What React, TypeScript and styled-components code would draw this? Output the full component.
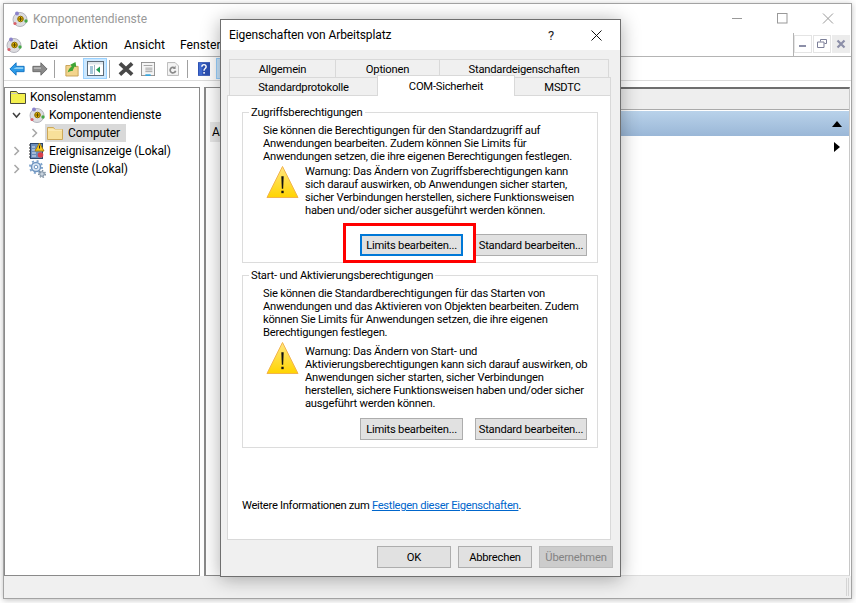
import * as React from 'react';
import styled, { createGlobalStyle } from 'styled-components';

const GlobalStyle = createGlobalStyle`
	html, body {
		margin: 0;
		padding: 0;
		background: #fff;
		font-family: Roboto, 'Liberation Sans', sans-serif;
		font-size: 11.2px;
		letter-spacing: -0.22px;
		color: #000;
	}
`;

const menuItems = [
	{ text: 'Datei', width: 43 },
	{ text: 'Aktion', width: 51 },
	{ text: 'Ansicht', width: 56 },
	{ text: 'Fenster', width: 56 },
];

const BackIcon = () => (
	<svg width="18" height="16" viewBox="0 0 18 16">
		<path d="M1 8 8 1v4h9v6H8v4z" fill="#2c9be8" stroke="#0f6fc0" />
		<path d="M8 6h8v2H5z" fill="#8fd0f5" />
	</svg>
);

const ForwardIcon = () => (
	<svg width="18" height="16" viewBox="0 0 18 16">
		<path d="M17 8 10 1v4H1v6h9v4z" fill="#8a8a8a" stroke="#666" />
		<path d="M2 6h8v2H2z" fill="#b5b5b5" />
	</svg>
);

const UpFolderIcon = () => (
	<svg width="16" height="18" viewBox="0 0 16 18">
		<path d="M1 5h5l1 1h8v11H1z" fill="#f3d48c" stroke="#c39b4f" />
		<path d="M3 13c1-4 3-6 5-7L6 4l6-3 1 6-2-1c-1 2-2 4-2 5-2 0-4 1-6 2z" fill="#3fa535" />
	</svg>
);

const ShowTreeIcon = () => (
	<svg width="17" height="15" viewBox="0 0 17 15">
		<rect x=".5" y=".5" width="16" height="14" fill="#fff" stroke="#5d6b78" />
		<rect x="1" y="1" width="15" height="2.500" fill="#dfe6ec" />
		<path d="M3 6h3M3 8h3M3 10h3M3 12h3" stroke="#4b8db5" />
		<path d="M13 5.500v6.500L9 8.750z" fill="#1f9d55" />
		<path d="M7.500 4v10" stroke="#9fb4c2" />
	</svg>
);

const DeleteIcon = () => (
	<svg width="17" height="16" viewBox="0 0 17 16">
		<path d="M2 2 15 14M15 2 2 14" stroke="#484848" strokeWidth="4" />
	</svg>
);

const PropertiesIcon = () => (
	<svg width="16" height="16" viewBox="0 0 16 16">
		<rect x=".5" y=".5" width="15" height="15" fill="#f5f5f5" stroke="#8a8a8a" />
		<path d="M3 4h10M5 7h8M5 9h8M5 11h8" stroke="#9a9a9a" />
		<rect x="5" y="14" width="6" height="2" fill="#3aa6dc" />
	</svg>
);

const RefreshIcon = () => (
	<svg width="14" height="16" viewBox="0 0 14 16">
		<path d="M.5.500h9l4 4v11H.5z" fill="#f4f4f4" stroke="#b0b0b0" />
		<path d="M10 10a3.200 3.200 0 1 1-1-3" fill="none" stroke="#8a8a8a" strokeWidth="2" />
		<path d="M10 4v4H7z" fill="#8a8a8a" />
	</svg>
);

const HelpIcon = () => (
	<svg width="14" height="16" viewBox="0 0 14 16">
		<rect width="14" height="16" fill="#2b4fb0" />
		<rect x="1" y="1" width="4" height="14" fill="#3f6ad0" />
		<path d="M4.500 5.500c0-3.500 5-3.500 5 0 0 2-2.500 2-2.500 4.500" fill="none" stroke="#fff" strokeWidth="1.700" />
		<rect x="6.200" y="11.500" width="1.800" height="2" fill="#fff" />
	</svg>
);

const ServicesLogo = ({ size = 16 }: { size?: number }) => (
	<svg width={size} height={size} viewBox="0 0 16 16">
		<circle cx="8" cy="8.500" r="7" fill="#dcdce0" stroke="#b4b4bc" />
		<circle cx="8.500" cy="8" r="2.800" fill="#e6b400" stroke="#8a6c00" />
		<path d="M8.500 6v4M6.500 8h4" stroke="#5c4a00" />
		<circle cx="5" cy="2.500" r="2" fill="#8c84cc" />
		<circle cx="3" cy="12.500" r="1.600" fill="#d9606a" />
		<circle cx="14" cy="10" r="1.700" fill="#46a846" />
	</svg>
);

const PlainFolder = () => (
	<svg width="16" height="14" viewBox="0 0 16 14">
		<path d="M.5 1.500h6l1.500 2h7.500v10H.5z" fill="#f8e09a" stroke="#cda859" />
		<path d="M1 4h14" stroke="#fff2c8" />
	</svg>
);

const RootFolder = () => (
	<svg width="16" height="14" viewBox="0 0 16 14">
		<path d="M.5 1.500h6l1.500 2h7.500v10H.5z" fill="#f4f04e" stroke="#4c4c3a" />
		<path d="M1 3.500h6" stroke="#c8c8c0" />
	</svg>
);

const EventLogIcon = () => (
	<svg width="16" height="18" viewBox="0 0 16 18">
		<rect x="1.500" y="1.500" width="12" height="15" fill="#6a8dbb" stroke="#2e466c" />
		<path d="M1 3H0M1 6H0M1 9H0M1 12H0M1 15H0" stroke="#222" />
		<path d="M3 5h3M3 8h3M3 11h4M3 14h4" stroke="#dfe7f2" />
		<path d="M10.500 1 15 9H6z" fill="#f5c61c" stroke="#a9820f" />
		<rect x="10" y="3.500" width="1" height="3" fill="#222" />
		<circle cx="11.500" cy="13" r="2.800" fill="#d9404a" />
	</svg>
);

const GearsIcon = () => (
	<svg width="17" height="18" viewBox="0 0 17 18">
		<circle cx="7" cy="7" r="4.500" fill="#dbe8f5" stroke="#6f94bf" strokeWidth="1.500" />
		<circle cx="7" cy="7" r="6" fill="none" stroke="#7ea3cb" strokeWidth="2" strokeDasharray="2 2.700" />
		<circle cx="7" cy="7" r="1.800" fill="#fff" stroke="#6f94bf" />
		<circle cx="13" cy="14" r="2.300" fill="#c7d2dd" stroke="#74879a" />
		<circle cx="13" cy="14" r="3.300" fill="none" stroke="#74879a" strokeWidth="1.300" strokeDasharray="1.500 1.500" />
	</svg>
);

const WarningIcon = ({ id }: { id: string }) => (
	<svg width="33" height="34" viewBox="0 0 34 34">
		<defs>
			<linearGradient id={id} x1="0" y1="0" x2="0" y2="1">
				<stop offset="0" stopColor="#ffe680" />
				<stop offset="1" stopColor="#ffd400" />
			</linearGradient>
		</defs>
		<path d="M17 1 33 33H1z" fill={`url(#${id})`} stroke="#f2b24a" />
		<path d="M15.800 11h2.400l-.5 13h-1.400z" fill="#111" />
		<rect x="15.800" y="26" width="2.400" height="2.500" fill="#111" />
	</svg>
);

const Chevron = ({ open }: { open?: boolean }) => (
	<svg width="9" height="10" viewBox="0 0 9 10">
		{open ? (
			<path d="M1 3 4.500 7 8 3" fill="none" stroke="#404040" strokeWidth="1.500" />
		) : (
			<path d="M2.500 1 6.500 5 2.500 9" fill="none" stroke="#a6a6a6" strokeWidth="1.500" />
		)}
	</svg>
);

export default function App() {
	return (
		<>
			<GlobalStyle />
			<Page>
				<Window>
					<TitleBar>
						<ServicesLogo />
						<TitleText>Komponentendienste</TitleText>
						<WindowControls>
							<svg width="102" height="12" viewBox="0 0 102 12">
								<path d="M0 5.500h10" stroke="#999" />
								<rect x="45.500" y=".5" width="9.500" height="9.500" fill="none" stroke="#999" />
								<path d="M91 .5 101 10.500M101 .5 91 10.500" stroke="#999" />
							</svg>
						</WindowControls>
					</TitleBar>
					<MenuBar>
						<MenuMain>
							<MenuLogo>
								<ServicesLogo />
							</MenuLogo>
							{menuItems.map(item => (
								<MenuItem key={item.text} $width={item.width}>
									{item.text}
								</MenuItem>
							))}
						</MenuMain>
						<MdiButtons>
							<MdiButton>
								<svg width="8" height="8" viewBox="0 0 8 8">
									<rect y="5" width="7" height="2" fill="#8c8fa8" />
								</svg>
							</MdiButton>
							<MdiButton>
								<svg width="10" height="10" viewBox="0 0 10 10">
									<path d="M3.500 2.500v-2h6v4h-2M.5 3h6.500v5.500H.5z" fill="none" stroke="#7c7f98" />
								</svg>
							</MdiButton>
							<MdiButton $close>
								<svg width="10" height="10" viewBox="0 0 10 10">
									<path d="M1.500 1.500 8.500 8.500M8.500 1.500 1.500 8.500" stroke="#8c8fa8" strokeWidth="2.200" />
								</svg>
							</MdiButton>
						</MdiButtons>
					</MenuBar>
					<Toolbar>
						<ToolButton $w={18} $ml={4}>
							<BackIcon />
						</ToolButton>
						<ToolButton $w={18} $ml={5}>
							<ForwardIcon />
						</ToolButton>
						<ToolSeparator $ml={5} />
						<ToolButton $w={16} $ml={9}>
							<UpFolderIcon />
						</ToolButton>
						<ToolButton $w={24} $ml={3} $active>
							<ShowTreeIcon />
						</ToolButton>
						<ToolSeparator $ml={2} />
						<ToolButton $w={18} $ml={7}>
							<DeleteIcon />
						</ToolButton>
						<ToolButton $w={16} $ml={5}>
							<PropertiesIcon />
						</ToolButton>
						<ToolButton $w={14} $ml={10}>
							<RefreshIcon />
						</ToolButton>
						<ToolSeparator $ml={7} />
						<ToolButton $w={14} $ml={9}>
							<HelpIcon />
						</ToolButton>
						<ToolButton $w={23} $ml={5} $active />
					</Toolbar>
					<Panes>
						<TreePane>
							<TreeRow $indent={5}>
								<RootFolder />
								<TreeLabel $gap={4}>Konsolenstamm</TreeLabel>
							</TreeRow>
							<TreeRow $indent={7}>
								<ChevronSlot>
									<Chevron open />
								</ChevronSlot>
								<ServicesLogo />
								<TreeLabel $gap={4}>Komponentendienste</TreeLabel>
							</TreeRow>
							<TreeRow $indent={25}>
								<ChevronSlot>
									<Chevron />
								</ChevronSlot>
								<SelectedNode>
									<PlainFolder />
									<TreeLabel $gap={5}>Computer</TreeLabel>
								</SelectedNode>
							</TreeRow>
							<TreeRow $indent={7}>
								<ChevronSlot>
									<Chevron />
								</ChevronSlot>
								<EventLogIcon />
								<TreeLabel $gap={4}>Ereignisanzeige (Lokal)</TreeLabel>
							</TreeRow>
							<TreeRow $indent={7}>
								<ChevronSlot>
									<Chevron />
								</ChevronSlot>
								<GearsIcon />
								<TreeLabel $gap={3}>Dienste (Lokal)</TreeLabel>
							</TreeRow>
						</TreePane>
						<CenterPane>
							<CenterHeader />
							<CenterRow>Arbeitsplatz</CenterRow>
						</CenterPane>
						<ActionsPane>
							<ActionsHeader />
							<ActionsTitle>
								<svg width="10" height="6" viewBox="0 0 10 6">
									<path d="M5 0 10 6H0z" fill="#000" />
								</svg>
							</ActionsTitle>
							<ActionsRow>
								<svg width="6" height="10" viewBox="0 0 6 10">
									<path d="M0 0 6 5 0 10z" fill="#000" />
								</svg>
							</ActionsRow>
						</ActionsPane>
					</Panes>
					<StatusBar>
						<StatusCell $width={85} />
						<StatusCell $width={1} />
					</StatusBar>

					<Dialog>
						<DialogTitle>
							<DialogTitleText>Eigenschaften von Arbeitsplatz</DialogTitleText>
							<HelpMark>?</HelpMark>
							<svg width="11" height="11" viewBox="0 0 11 11">
								<path d="M.5.500 10.500 10.500M10.500.500.5 10.500" stroke="#111" />
							</svg>
						</DialogTitle>
						<DialogBody>
							<Tabs>
								<TabRow>
									<Tab $width={107}>Allgemein</Tab>
									<Tab $width={105}>Optionen</Tab>
									<Tab $width={170}>Standardeigenschaften</Tab>
								</TabRow>
								<TabRow>
									<Tab $width={149}>Standardprotokolle</Tab>
									<Tab $width={138} $active>
										COM-Sicherheit
									</Tab>
									<Tab $width={97}>MSDTC</Tab>
								</TabRow>
							</Tabs>
							<TabPanel>
								<Group>
									<Legend>Zugriffsberechtigungen</Legend>
									<GroupText>
										Sie können die Berechtigungen für den Standardzugriff auf
										<br />
										Anwendungen bearbeiten. Zudem können Sie Limits für
										<br />
										Anwendungen setzen, die ihre eigenen Berechtigungen festlegen.
									</GroupText>
									<WarningRow $top={2} $iconTop={0}>
										<WarningIcon id="warnA" />
										<WarningText>
											Warnung: Das Ändern von Zugriffsberechtigungen kann
											<br />
											sich darauf auswirken, ob Anwendungen sicher starten,
											<br />
											sicher Verbindungen herstellen, sichere Funktionsweisen
											<br />
											haben und/oder sicher ausgeführt werden können.
										</WarningText>
									</WarningRow>
									<GroupButtons $top={17}>
										<RedFrame />
										<PushButton $width={103} $focused>
											Limits bearbeiten...
										</PushButton>
										<PushButton $width={112}>Standard bearbeiten...</PushButton>
									</GroupButtons>
								</Group>
								<Group $second>
									<Legend>Start- und Aktivierungsberechtigungen</Legend>
									<GroupText>
										Sie können die Standardberechtigungen für das Starten von
										<br />
										Anwendungen und das Aktivieren von Objekten bearbeiten. Zudem
										<br />
										können Sie Limits für Anwendungen setzen, die ihre eigenen
										<br />
										Berechtigungen festlegen.
									</GroupText>
									<WarningRow $top={6} $iconTop={-4}>
										<WarningIcon id="warnB" />
										<WarningText>
											Warnung: Das Ändern von Start- und
											<br />
											Aktivierungsberechtigungen kann sich darauf auswirken, ob
											<br />
											Anwendungen sicher starten, sicher Verbindungen
											<br />
											herstellen, sichere Funktionsweisen haben und/oder sicher
											<br />
											ausgeführt werden können.
										</WarningText>
									</WarningRow>
									<GroupButtons $top={8}>
										<PushButton $width={103}>Limits bearbeiten...</PushButton>
										<PushButton $width={112}>Standard bearbeiten...</PushButton>
									</GroupButtons>
								</Group>
								<InfoLine>
									Weitere Informationen zum <InfoLink href="#">Festlegen dieser Eigenschaften</InfoLink>.
								</InfoLine>
							</TabPanel>
							<DialogFooter>
								<PushButton $width={74}>OK</PushButton>
								<PushButton $width={74}>Abbrechen</PushButton>
								<PushButton $width={74} disabled>
									Übernehmen
								</PushButton>
							</DialogFooter>
						</DialogBody>
					</Dialog>
				</Window>
			</Page>
		</>
	);
}

const Page = styled.div`
	width: 856px;
	height: 603px;
	padding: 3px 0 0 3px;
	box-sizing: border-box;
	overflow: hidden;
`;

const Window = styled.div`
	position: relative;
	width: 849px;
	height: 596px;
	box-sizing: border-box;
	border: 1px solid #a3a3a3;
	background: #fff;
	box-shadow: 0 1px 6px rgba(0, 0, 0, 0.25);
	display: flex;
	flex-direction: column;
`;

const TitleBar = styled.div`
	height: 29px;
	display: flex;
	align-items: center;
	padding-left: 8px;
`;

const TitleText = styled.div`
	margin-left: 5px;
	color: #999;
	font-size: 12px;
	letter-spacing: 0;
`;

const WindowControls = styled.div`
	margin-left: auto;
	margin-right: 17px;
	display: flex;
`;

const MenuBar = styled.div`
	height: 24px;
	display: flex;
	box-sizing: border-box;
`;

const MenuMain = styled.div`
	flex: 1;
	display: flex;
	align-items: center;
	border-bottom: 1px solid #b4b4b4;
	border-right: 1px solid #b4b4b4;
`;

const MenuLogo = styled.div`
	width: 26px;
	padding-left: 2px;
	box-sizing: border-box;
	display: flex;
`;

const MenuItem = styled.div<{ $width: number }>`
	width: ${p => p.$width}px;
	font-size: 12.2px;
	letter-spacing: 0;
`;

const MdiButtons = styled.div`
	width: 57px;
	display: flex;
	gap: 1px;
	padding: 2px 0 3px;
	border-bottom: 1px solid #b4b4b4;
	box-sizing: border-box;
`;

const MdiButton = styled.div<{ $close?: boolean }>`
	width: 18px;
	box-sizing: border-box;
	border: 1px solid ${p => (p.$close ? '#ececec' : '#e4e4e4')};
	background: ${p => (p.$close ? '#ececec' : '#fff')};
	display: flex;
	align-items: center;
	justify-content: center;
`;

const Toolbar = styled.div`
	height: 23px;
	display: flex;
	align-items: center;
	border-bottom: 1px solid #dcdcdc;
`;

const ToolButton = styled.div<{ $w: number; $ml: number; $active?: boolean }>`
	width: ${p => p.$w}px;
	height: 21px;
	margin-left: ${p => p.$ml}px;
	box-sizing: border-box;
	display: flex;
	align-items: center;
	justify-content: center;
	background: ${p => (p.$active ? '#cce8ff' : 'transparent')};
	border: 1px solid ${p => (p.$active ? '#99d1ff' : 'transparent')};
`;

const ToolSeparator = styled.div<{ $ml: number }>`
	width: 1px;
	height: 18px;
	margin-left: ${p => p.$ml}px;
	background: #a0a0a0;
`;

const Panes = styled.div`
	flex: 1;
	display: flex;
	gap: 4px;
	margin-top: 6px;
	min-height: 0;
`;

const TreePane = styled.div`
	width: 196px;
	box-sizing: border-box;
	border: 1px solid #8a8a8a;
`;

const TreeRow = styled.div<{ $indent: number }>`
	height: 18px;
	display: flex;
	align-items: center;
	padding-left: ${p => p.$indent}px;
	white-space: nowrap;
`;

const ChevronSlot = styled.div`
	width: 17px;
	display: flex;
	align-items: center;
`;

const SelectedNode = styled.div`
	width: 81px;
	height: 18px;
	margin-left: -2px;
	padding-left: 2px;
	box-sizing: border-box;
	background: #d9d9d9;
	display: flex;
	align-items: center;
`;

const TreeLabel = styled.span<{ $gap: number }>`
	margin-left: ${p => p.$gap}px;
	font-size: 12px;
	letter-spacing: -0.1px;
`;

const CenterPane = styled.div`
	width: 300px;
	box-sizing: border-box;
	border: 1px solid #8a8a8a;
	border-left-width: 2px;
`;

const CenterHeader = styled.div`
	height: 34px;
`;

const CenterRow = styled.div`
	height: 20px;
	margin-left: 4px;
	padding-left: 2px;
	background: #e8e8e8;
	display: flex;
	align-items: center;
	font-size: 12px;
`;

const ActionsPane = styled.div`
	flex: 1;
	box-sizing: border-box;
	border-top: 2px solid #6e6e6e;
	border-right: 1px solid #c8c8c8;
	border-bottom: 1px solid #dcdcdc;
	margin-right: 1px;
`;

const ActionsHeader = styled.div`
	height: 20px;
	background: #eeeeee;
	border-bottom: 1px solid #aaa;
`;

const ActionsTitle = styled.div`
	height: 25px;
	margin-top: 1px;
	background: linear-gradient(#b9d2ea, #9ab7d7);
	display: flex;
	align-items: center;
	justify-content: flex-end;
	padding-right: 7px;
`;

const ActionsRow = styled.div`
	height: 22px;
	display: flex;
	align-items: center;
	justify-content: flex-end;
	padding-right: 9px;
`;

const StatusBar = styled.div`
	height: 22px;
	background: #f0f0f0;
	display: flex;
	justify-content: flex-end;
	padding: 2px 2px 2px 0;
	box-sizing: border-box;
`;

const StatusCell = styled.div<{ $width: number }>`
	width: ${p => p.$width}px;
	border-right: 1px solid #d4d4d4;
`;

const Dialog = styled.div`
	position: absolute;
	left: 216px;
	top: 15px;
	width: 401px;
	height: 558px;
	box-sizing: border-box;
	border: 1px solid #6f6f6f;
	background: #f0f0f0;
	box-shadow: 0 2px 18px rgba(0, 0, 0, 0.32);
	display: flex;
	flex-direction: column;
`;

const DialogTitle = styled.div`
	height: 30px;
	background: #fff;
	display: flex;
	align-items: center;
	padding: 0 18px 0 8px;
`;

const DialogTitleText = styled.div`
	font-size: 12px;
	letter-spacing: -0.1px;
	flex: 1;
`;

const HelpMark = styled.div`
	width: 43px;
	font-size: 13px;
	color: #222;
`;

const DialogBody = styled.div`
	flex: 1;
	padding: 9px 9px 0 6px;
	display: flex;
	flex-direction: column;
`;

const Tabs = styled.div`
	display: flex;
	flex-direction: column;
	position: relative;
	z-index: 1;
`;

const TabRow = styled.div`
	height: 18px;
	display: flex;
	padding-left: 3px;
`;

const Tab = styled.div<{ $width: number; $active?: boolean }>`
	width: ${p => p.$width}px;
	height: ${p => (p.$active ? 21 : 19)}px;
	margin-top: ${p => (p.$active ? -2 : 0)}px;
	margin-left: -1px;
	padding-top: ${p => (p.$active ? 0 : 1)}px;
	box-sizing: border-box;
	border: 1px solid #d9d9d9;
	border-bottom: ${p => (p.$active ? '0' : '1px solid #d9d9d9')};
	background: ${p => (p.$active ? '#fff' : '#f0f0f0')};
	position: relative;
	z-index: ${p => (p.$active ? 2 : 0)};
	display: flex;
	align-items: center;
	justify-content: center;
	white-space: nowrap;
`;

const TabPanel = styled.div`
	height: 445px;
	box-sizing: border-box;
	border: 1px solid #d9d9d9;
	background: #fff;
	padding: 16px 12px 0 14px;
`;

const Group = styled.div<{ $second?: boolean }>`
	position: relative;
	box-sizing: border-box;
	border: 1px solid #dcdcdc;
	height: ${p => (p.$second ? 173 : 151)}px;
	margin-top: ${p => (p.$second ? 12 : 0)}px;
	padding: 11px 10px 0 20px;
`;

const Legend = styled.div`
	position: absolute;
	left: 6px;
	top: -7px;
	padding: 0 2px;
	background: #fff;
	line-height: 13px;
	white-space: nowrap;
`;

const GroupText = styled.div`
	line-height: 13px;
	white-space: nowrap;
`;

const WarningRow = styled.div<{ $top: number; $iconTop: number }>`
	display: flex;
	margin-top: ${p => p.$top}px;
	padding-left: 3px;

	svg {
		flex: none;
		margin-top: ${p => p.$iconTop}px;
	}
`;

const WarningText = styled.div`
	margin-left: 6px;
	line-height: 13px;
	white-space: nowrap;
`;

const GroupButtons = styled.div<{ $top: number }>`
	position: relative;
	display: flex;
	justify-content: flex-end;
	gap: 12px;
	margin-top: ${p => p.$top}px;
`;

const RedFrame = styled.div`
	position: absolute;
	left: 80px;
	top: -11px;
	width: 133px;
	height: 40px;
	box-sizing: border-box;
	border: 3px solid #f00;
	pointer-events: none;
`;

const PushButton = styled.button<{ $width: number; $focused?: boolean }>`
	width: ${p => p.$width}px;
	height: 22px;
	padding: 0;
	box-sizing: border-box;
	font: inherit;
	letter-spacing: inherit;
	color: #000;
	background: #e1e1e1;
	border: ${p => (p.$focused ? '2px solid #0078d7' : '1px solid #adadad')};
	white-space: nowrap;

	&:disabled {
		background: #cccccc;
		border-color: #bfbfbf;
		color: #838383;
	}
`;

const InfoLine = styled.div`
	margin-top: 51px;
	line-height: 13px;
	letter-spacing: -0.3px;
	white-space: nowrap;
`;

const InfoLink = styled.a`
	color: #0066cc;
`;

const DialogFooter = styled.div`
	display: flex;
	justify-content: flex-end;
	gap: 7px;
	margin: 6px -2px 0 0;
`;
